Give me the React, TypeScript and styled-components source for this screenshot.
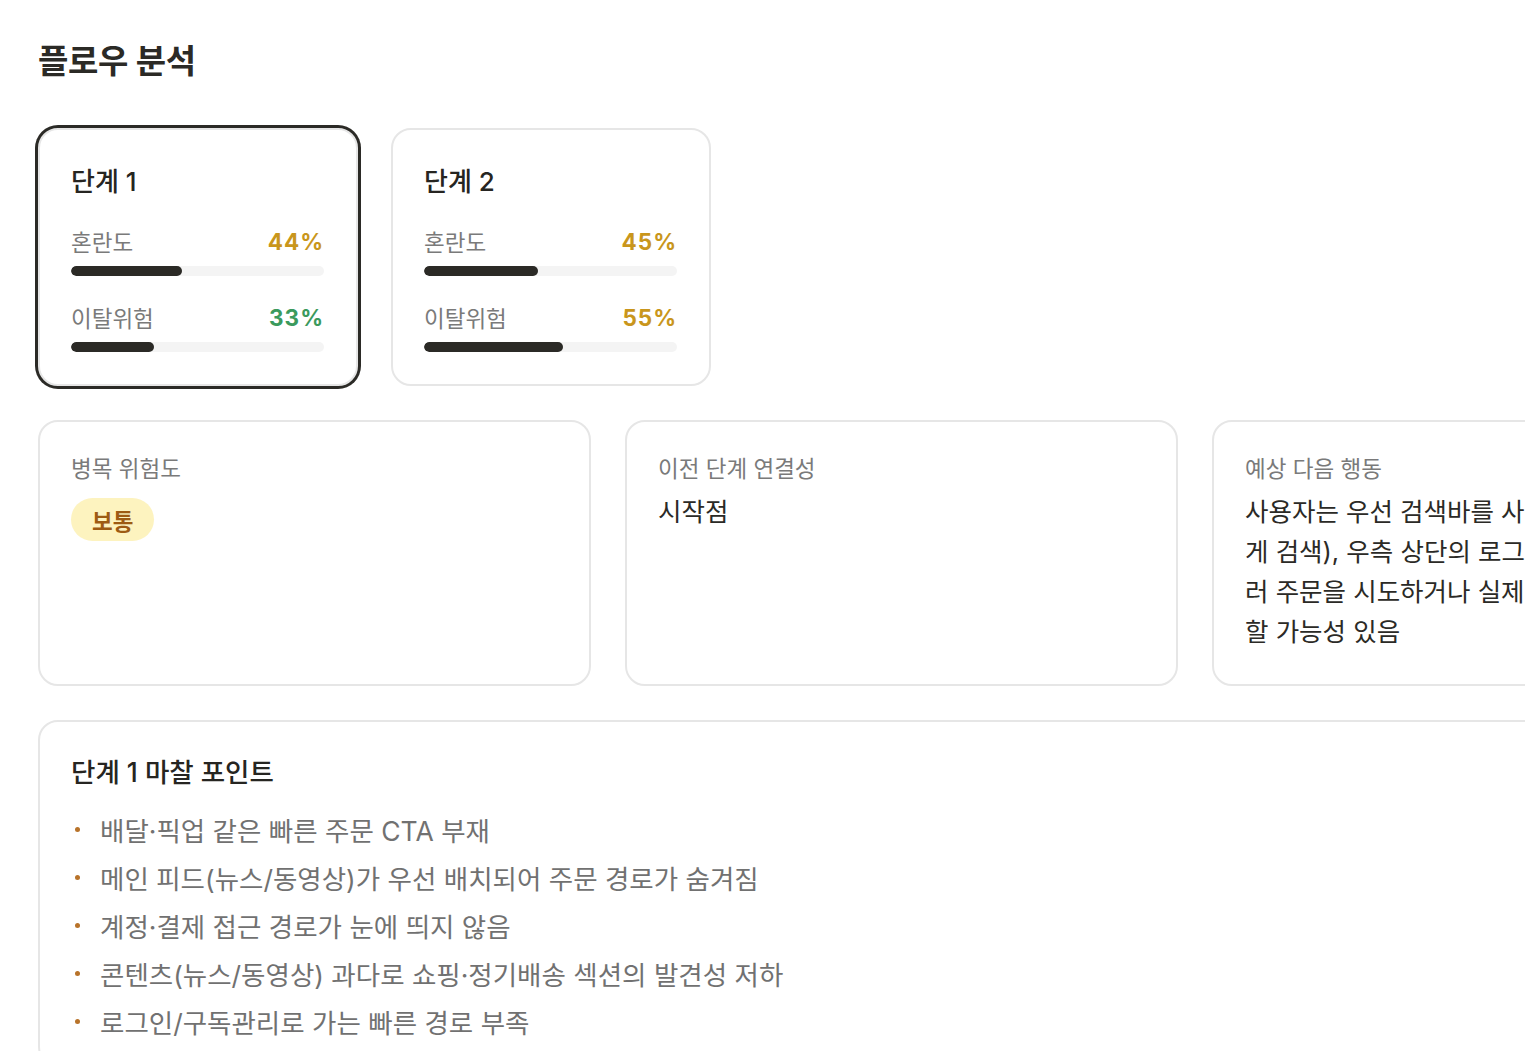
import * as React from 'react';
import styled, { createGlobalStyle } from 'styled-components';

const GlobalStyle = createGlobalStyle`
	html, body {
		margin: 0;
		padding: 0;
		overflow: hidden;
		background: #ffffff;
	}
	body {
		font-family: Inter, "Noto Sans CJK KR", sans-serif;
		color: #2b2a26;
	}
`;

const Page = styled.div`
	padding: 38px 38px 40px;
	width: 1727px;
`;

const Heading = styled.h1`
	margin: 0 0 44px;
	font-size: 33px;
	line-height: 46px;
	font-weight: 700;
	color: #2b2a26;
	letter-spacing: -0.3px;
`;

const StageRow = styled.div`
	display: flex;
	gap: 33px;
	margin-bottom: 34px;
`;

const StageCard = styled.div<{ $active?: boolean }>`
	box-sizing: border-box;
	width: 320px;
	padding: 34px 32px 32px 31px;
	border: 2px solid #e6e6e6;
	border-radius: 20px;
	background: #fff;
	box-shadow: ${(p) => (p.$active ? '0 0 0 3px #2b2a26' : 'none')};
`;

const StageTitle = styled.div`
	font-size: 26px;
	line-height: 36px;
	font-weight: 500;
	color: #262521;
	margin-bottom: 26px;
`;

const Metrics = styled.div`
	display: grid;
	gap: 26px;
`;

const Metric = styled.div`
	display: grid;
	gap: 10px;
`;

const MetricHead = styled.div`
	display: flex;
	justify-content: space-between;
	align-items: center;
	height: 30px;
`;

const MetricLabel = styled.span`
	font-size: 22.5px;
	color: #7a7a7a;
`;

const MetricValue = styled.span<{ $tone: 'warn' | 'good' }>`
	font-family: Inter, sans-serif;
	font-size: 22.5px;
	font-weight: 700;
	letter-spacing: 1px;
	color: ${(p) => (p.$tone === 'good' ? '#3b9a5d' : '#c9961c')};
`;

const Track = styled.div`
	height: 10px;
	border-radius: 5px;
	background: #f4f4f4;
	overflow: hidden;
`;

const Fill = styled.div`
	height: 100%;
	border-radius: 5px;
	background: #2b2a26;
`;

const InfoGrid = styled.div`
	display: grid;
	grid-template-columns: repeat(3, 553px);
	gap: 34px;
	margin-bottom: 34px;
`;

const Card = styled.div`
	box-sizing: border-box;
	border: 2px solid #e6e6e6;
	border-radius: 20px;
	background: #fff;
	padding: 32px 31px;
`;

const InfoCard = styled(Card)`
	height: 266px;
`;

const InfoLabel = styled.div`
	font-size: 22.5px;
	line-height: 30px;
	color: #7a7a7a;
`;

const InfoValue = styled.div`
	margin-top: 8px;
	font-size: 25.5px;
	line-height: 40px;
	color: #2b2a26;
	word-break: break-all;
`;

const Badge = styled.span`
	display: inline-flex;
	align-items: center;
	margin-top: 14px;
	height: 43px;
	padding: 0 21px;
	border-radius: 22px;
	background: #fdf3bf;
	color: #9d5b13;
	font-size: 22.5px;
	font-weight: 700;
`;

const FrictionCard = styled(Card)`
	padding-bottom: 20px;
`;

const SectionTitle = styled.div`
	font-size: 26.5px;
	line-height: 36px;
	font-weight: 500;
	color: #262521;
	margin-bottom: 15px;
`;

const List = styled.ul`
	list-style: none;
	margin: 0;
	padding: 0;
`;

const Item = styled.li`
	display: flex;
	align-items: center;
	height: 48px;
	font-size: 26.5px;
	color: #717171;
`;

const Dot = styled.span`
	flex: none;
	width: 5px;
	height: 5px;
	margin: 0 20px 0 4px;
	border-radius: 50%;
	background: #b8732a;
`;

const stages = [
	{ name: '단계 1', confusion: 44, churn: 33, churnTone: 'good' as const, active: true },
	{ name: '단계 2', confusion: 45, churn: 55, churnTone: 'warn' as const, active: false },
];

const frictions = [
	'배달·픽업 같은 빠른 주문 CTA 부재',
	'메인 피드(뉴스/동영상)가 우선 배치되어 주문 경로가 숨겨짐',
	'계정·결제 접근 경로가 눈에 띄지 않음',
	'콘텐츠(뉴스/동영상) 과다로 쇼핑·정기배송 섹션의 발견성 저하',
	'로그인/구독관리로 가는 빠른 경로 부족',
];

const nextAction =
	'사용자는 우선 검색바를 사용해(메뉴명을 빠르게 검색), 우측 상단의 로그인 및 주문 탭을 눌러 주문을 시도하거나 실제 매장 위치 등 탐색할 가능성 있음';

export default function App() {
	return (
		<Page>
			<GlobalStyle />
			<Heading>플로우 분석</Heading>
			<StageRow>
				{stages.map((s) => (
					<StageCard key={s.name} $active={s.active}>
						<StageTitle>{s.name}</StageTitle>
						<Metrics>
							<Metric>
								<MetricHead>
									<MetricLabel>혼란도</MetricLabel>
									<MetricValue $tone="warn">{s.confusion}%</MetricValue>
								</MetricHead>
								<Track>
									<Fill style={{ width: `${s.confusion}%` }} />
								</Track>
							</Metric>
							<Metric>
								<MetricHead>
									<MetricLabel>이탈위험</MetricLabel>
									<MetricValue $tone={s.churnTone}>{s.churn}%</MetricValue>
								</MetricHead>
								<Track>
									<Fill style={{ width: `${s.churn}%` }} />
								</Track>
							</Metric>
						</Metrics>
					</StageCard>
				))}
			</StageRow>
			<InfoGrid>
				<InfoCard>
					<InfoLabel>병목 위험도</InfoLabel>
					<Badge>보통</Badge>
				</InfoCard>
				<InfoCard>
					<InfoLabel>이전 단계 연결성</InfoLabel>
					<InfoValue>시작점</InfoValue>
				</InfoCard>
				<InfoCard>
					<InfoLabel>예상 다음 행동</InfoLabel>
					<InfoValue>{nextAction}</InfoValue>
				</InfoCard>
			</InfoGrid>
			<FrictionCard>
				<SectionTitle>단계 1 마찰 포인트</SectionTitle>
				<List>
					{frictions.map((f) => (
						<Item key={f}>
							<Dot />
							{f}
						</Item>
					))}
				</List>
			</FrictionCard>
		</Page>
	);
}
